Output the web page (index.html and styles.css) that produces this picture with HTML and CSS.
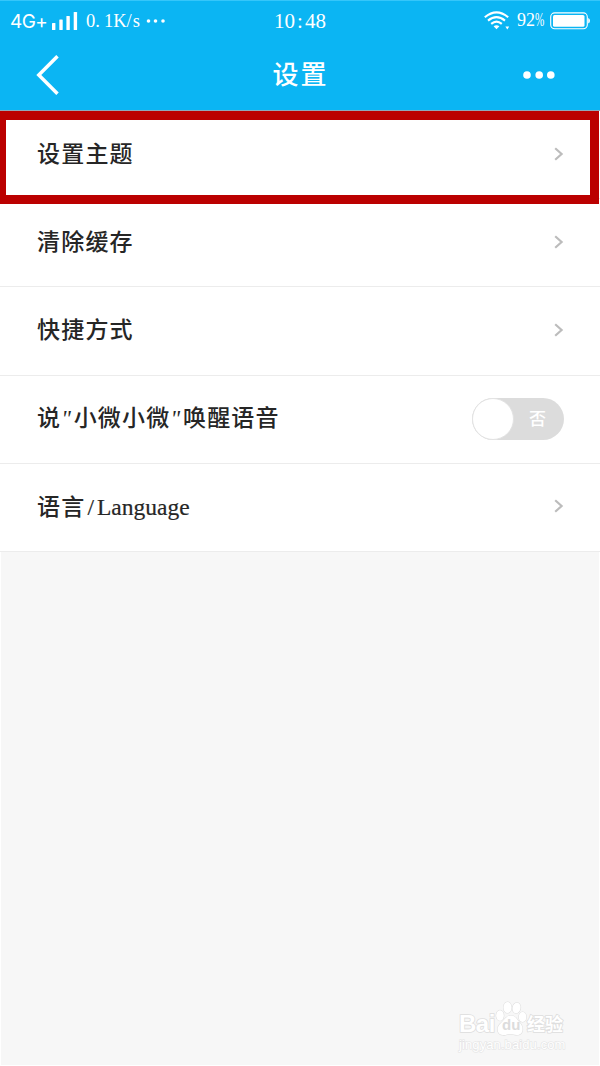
FILE: index.html
```html
<!DOCTYPE html>
<html lang="zh-CN">

<head>
  <meta charset="UTF-8">
  <meta name="viewport" content="width=device-width, initial-scale=1.0">
  <title>设置</title>
  <link rel="stylesheet" href="styles.css">
</head>

<body>
  <header class="header">
    <div class="status-bar">
      <div class="status-left">
        <span class="network">4G+</span>
        <svg class="signal" width="26" height="18" viewBox="0 0 26 18" fill="#fff" aria-hidden="true">
          <rect x="0" y="11" width="3.4" height="7" rx="0.6"/>
          <rect x="7.3" y="7.5" width="3.4" height="10.5" rx="0.6"/>
          <rect x="14.4" y="4" width="3.4" height="14" rx="0.6"/>
          <rect x="21.7" y="0" width="3.4" height="18" rx="0.6"/>
        </svg>
        <span class="speed">0<span class="dot">.</span>1K<span class="slash">/</span>s</span>
        <svg class="status-dots" width="20" height="4" viewBox="0 0 20 4" fill="#fff" aria-hidden="true">
          <circle cx="2.5" cy="2" r="1.8"/>
          <circle cx="9.5" cy="2" r="1.8"/>
          <circle cx="17" cy="2" r="1.8"/>
        </svg>
      </div>
      <span class="time">10<span class="colon">:</span>48</span>
      <div class="status-right">
        <svg class="wifi" width="26" height="19" viewBox="0 0 26 19" fill="none" stroke="#fff" stroke-width="2.1" aria-hidden="true">
          <path d="M0.8 6.2 Q12.5 -3.6 24.2 6.2"/>
          <path d="M4 9.6 Q12.5 2.6 21 9.6"/>
          <path d="M7.2 12.9 Q12.5 8.4 17.8 12.9"/>
          <path d="M9.6 15.3 Q12.5 13 15.4 15.3 L12.5 18.2Z" fill="#fff" stroke="none"/>
          <path d="M21.4 15.4 H25.2 L23.3 18.4Z" fill="#fff" stroke="none"/>
        </svg>
        <span class="percent">92<span class="sign">%</span></span>
        <svg class="battery" width="40" height="18" viewBox="0 0 40 18" aria-hidden="true">
          <rect x="0.7" y="0.9" width="36.6" height="15.8" rx="4" fill="none" stroke="#fff" stroke-width="1.1"/>
          <rect x="3" y="3" width="31.5" height="11.8" rx="1.5" fill="#fff"/>
          <path d="M38.2 6 Q40 6.6 40 8.8 Q40 11 38.2 11.6Z" fill="#fff"/>
        </svg>
      </div>
    </div>
    <div class="title-bar">
      <svg class="back" width="24" height="40" viewBox="0 0 24 40" fill="none" stroke="#fff" stroke-width="3.5" aria-hidden="true">
        <path d="M21.5 1.2 L2.8 20 L21.5 38.8"/>
      </svg>
      <h1 class="title">设置</h1>
      <svg class="more" width="32" height="8" viewBox="0 0 32 8" fill="#fff" aria-hidden="true">
        <circle cx="4" cy="4" r="3.8"/>
        <circle cx="16.2" cy="4" r="3.8"/>
        <circle cx="27.8" cy="4" r="3.8"/>
      </svg>
    </div>
  </header>

  <main class="settings">
    <div class="row">
      <span class="label">设置主题</span>
      <svg class="arrow" viewBox="0 0 10 14"><path d="M1.2 1.2 L7.6 7 L1.2 12.8"/></svg>
      <div class="highlight"></div>
    </div>
    <div class="row">
      <span class="label">清除缓存</span>
      <svg class="arrow" viewBox="0 0 10 14"><path d="M1.2 1.2 L7.6 7 L1.2 12.8"/></svg>
    </div>
    <div class="row">
      <span class="label">快捷方式</span>
      <svg class="arrow" viewBox="0 0 10 14"><path d="M1.2 1.2 L7.6 7 L1.2 12.8"/></svg>
    </div>
    <div class="row">
      <span class="label">说<i class="quote">"</i>小微小微<i class="quote">"</i>唤醒语音</span>
      <div class="switch">
        <span class="knob"></span>
        <span class="switch-text">否</span>
      </div>
    </div>
    <div class="row">
      <span class="label">语言<span class="latin"><span class="divider">/</span>Language</span></span>
      <svg class="arrow" viewBox="0 0 10 14"><path d="M1.2 1.2 L7.6 7 L1.2 12.8"/></svg>
    </div>
  </main>

  <footer class="blank">
    <div class="watermark">
      <div class="brand">
        <span class="bai">Bai</span>
        <div class="paw">
          <svg width="32" height="36" viewBox="0 0 32 36" fill="#fff" stroke="#dedede" stroke-width="1.1" aria-hidden="true">
            <ellipse cx="5" cy="14.5" rx="3.8" ry="5.2"/>
            <ellipse cx="12.5" cy="6.5" rx="4" ry="5.5"/>
            <ellipse cx="21.5" cy="7" rx="4" ry="5.3" transform="rotate(12 21.5 7)"/>
            <ellipse cx="27.6" cy="16" rx="3.8" ry="5"/>
            <path d="M16 14.5 C21 14.5 22 19 25 22 C29 26 28.5 34 22 34 C19 34 18 33 15 33 C12 33 11 34.5 8 34 C2 33.5 1 27 5 23 C9 19.5 11 14.5 16 14.5Z"/>
          </svg>
          <span class="du">du</span>
        </div>
        <span class="jingyan">经验</span>
      </div>
      <span class="site">jingyan.baidu.com</span>
    </div>
  </footer>
</body>

</html>
```

FILE: styles.css
```css
:root {
  --blue: #0bb5f3;
  --red: #bb0000;
  --line: #ececec;
  --grey-bg: #f7f7f7;
}

* {
  box-sizing: border-box;
}

body {
  margin: 0;
  height: 1066px;
  display: flex;
  flex-direction: column;
  overflow: hidden;
  background: #fff;
  color: #262626;
  font-family: "Liberation Serif", "Noto Sans CJK SC", serif;
}

svg {
  display: block;
  flex: none;
}

.header {
  height: 111px;
  background: var(--blue);
  border-top: 1px solid #35c6fa;
  border-bottom: 1px solid #8fa9bb;
  color: #fff;
}

.status-bar {
  height: 39px;
  padding: 0 10px;
  display: grid;
  grid-template-columns: 1fr auto 1fr;
  align-items: center;
}

.status-left,
.status-right {
  display: flex;
  align-items: center;
}

.status-right {
  justify-content: flex-end;
}

.network {
  width: 42px;
  padding-top: 3px;
  font: 19px/20px Inter, "Liberation Sans", sans-serif;
  letter-spacing: -0.6px;
}

.speed {
  width: 54px;
  margin-left: 8px;
  font-size: 18.5px;
  line-height: 22px;
  white-space: nowrap;
}

.dot {
  margin-right: 4px;
}

.slash {
  margin: 0 1px 0 0;
}

.status-dots {
  margin-left: 6px;
}

.time {
  font-size: 21px;
  line-height: 24px;
}

.colon {
  margin: 0 2px;
}

.percent {
  margin: 0 6px 0 7px;
  display: flex;
  font-size: 18px;
}

.sign {
  width: 9px;
  transform: scaleX(0.62);
  transform-origin: left;
}

.battery {
  margin-top: 1px;
}

.title-bar {
  height: 70px;
  padding: 0 45px 0 36px;
  display: grid;
  grid-template-columns: 1fr auto 1fr;
  align-items: center;
}

.title {
  margin: 0;
  padding: 2px 0 0 10px;
  font-size: 26px;
  font-weight: 500;
  line-height: 40px;
  letter-spacing: 2px;
}

.more {
  justify-self: end;
}

.settings {
  background: #fff;
}

.row {
  position: relative;
  height: 88.2px;
  padding: 0 36px 2px 37px;
  display: flex;
  align-items: center;
  justify-content: space-between;
  border-bottom: 1px solid var(--line);
}

.label {
  padding-top: 2px;
  font-size: 23px;
  font-weight: 500;
  line-height: 34px;
  letter-spacing: 1.2px;
}

.quote {
  letter-spacing: 2.8px;
}

.latin {
  font-size: 23.5px;
  letter-spacing: 0;
  -webkit-text-stroke: 0.2px #262626;
}

.divider {
  margin: 0 3px 0 2px;
}

.arrow {
  width: 10px;
  height: 14px;
  fill: none;
  stroke: #bcbcbc;
  stroke-width: 2.2;
}

.highlight {
  position: absolute;
  top: 0;
  left: 0;
  z-index: 1;
  width: 599px;
  height: 93px;
  border: 9px solid var(--red);
  border-left-width: 6px;
}

.switch {
  width: 92px;
  height: 42px;
  margin-top: 1px;
  display: flex;
  align-items: center;
  justify-content: space-between;
  padding-right: 18px;
  border-radius: 21px;
  background: #dcdcdc;
}

.knob {
  width: 42px;
  height: 42px;
  border: 1px solid #e3e3e3;
  border-radius: 50%;
  background: #fff;
}

.switch-text {
  padding-top: 2px;
  color: #fff;
  font-size: 17px;
  font-weight: 500;
  line-height: 24px;
}

.blank {
  flex: 1;
  margin: 0 1px 1px;
  padding: 0 32px 12px 0;
  display: flex;
  align-items: flex-end;
  justify-content: flex-end;
  background: var(--grey-bg);
}

.watermark {
  width: 108px;
  color: #fff;
  font-family: "Liberation Sans", "Noto Sans CJK SC", sans-serif;
  -webkit-text-stroke: 1.6px #dedede;
  paint-order: stroke fill;
}

.brand {
  display: flex;
  align-items: flex-end;
  height: 36px;
}

.bai {
  width: 36px;
  font-size: 24px;
  font-weight: 700;
  line-height: 26px;
  letter-spacing: -0.5px;
}

.paw {
  position: relative;
  width: 32px;
}

.du {
  position: absolute;
  left: 7px;
  bottom: 3px;
  color: #dcdcdc;
  font-size: 15px;
  font-weight: 700;
  line-height: 18px;
  -webkit-text-stroke: 0;
}

.jingyan {
  font-size: 18px;
  font-weight: 700;
  line-height: 24px;
}

.site {
  display: block;
  font-size: 13px;
  line-height: 16px;
  letter-spacing: 0.1px;
  -webkit-text-stroke: 1.2px #e4e4e4;
}
```
